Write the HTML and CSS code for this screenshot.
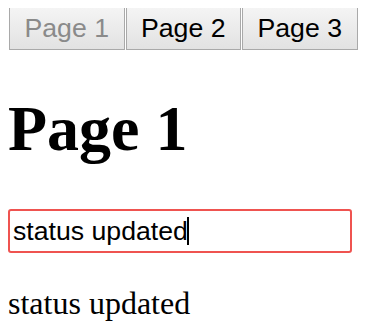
FILE: index.html
```html
<!DOCTYPE html>
<html>
<head>
<meta charset="utf-8">
<link rel="stylesheet" href="styles.css">
</head>
<body>
<nav class="tabs">
  <button class="tab" disabled>Page 1</button>
  <button class="tab">Page 2</button>
  <button class="tab">Page 3</button>
</nav>
<h1 class="title">Page 1</h1>
<div class="field">
  <input class="status-input" type="text" value="status updated">
  <span class="caret"></span>
</div>
<p class="status-text">status updated</p>
</body>
</html>
```
FILE: styles.css
```css
html, body {
  background: #fff;
}
body {
  margin: 8px;
  font-family: "Liberation Serif", "Times New Roman", serif;
  font-size: 32px;
  color: #000;
}
.tabs {
  display: flex;
  margin: -1px 0 0 1px;
}
.tab {
  font-family: "Liberation Sans", Arial, sans-serif;
  font-size: 26.67px;
  height: 43px;
  padding: 0 14.5px;
  margin: 0 1px 0 0;
  border: 1px solid #a9a9a9;
  border-radius: 0;
  background: linear-gradient(#f4f4f4, #e2e2e2);
  color: #000;
}
.tab:disabled {
  color: #8a8a8a;
}
.title {
  font-size: 64px;
  font-weight: bold;
  margin: 42px 0 43px;
}
.field {
  position: relative;
  width: 344px;
}
.status-input {
  display: block;
  box-sizing: border-box;
  width: 344px;
  height: 44px;
  margin: 0;
  padding: 0 3px;
  border: 2px solid #ef5350;
  border-radius: 3px;
  font-family: "Liberation Sans", Arial, sans-serif;
  font-size: 26.67px;
  color: #000;
  outline: none;
  caret-color: transparent;
}
.caret {
  position: absolute;
  left: 179px;
  top: 8px;
  width: 2px;
  height: 28px;
  background: #000;
}
.status-text {
  margin: 32px 0 0;
}
```
